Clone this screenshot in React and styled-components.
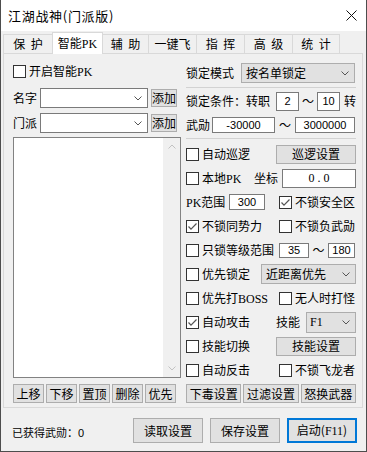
import React from 'react'
import styled, { createGlobalStyle } from 'styled-components'

const CJK = '"Noto Sans CJK SC", "Microsoft YaHei", sans-serif'
const NUM = '"Liberation Sans", Arial, sans-serif'
const SERIF = '"Liberation Serif", "Times New Roman", serif'

const TABS = [
  { label: '保 护', w: 50 },
  { label: '智能PK', w: 51, active: true },
  { label: '辅 助', w: 47 },
  { label: '一键飞', w: 49 },
  { label: '指 挥', w: 49 },
  { label: '高 级', w: 49 },
  { label: '统 计', w: 48 },
]

const LIST_BUTTONS = ['上移', '下移', '置顶', '删除', '优先']
const BOTTOM_BUTTONS = ['下毒设置', '过滤设置', '怒换武器']

const GlobalStyle = createGlobalStyle`
  html, body { margin: 0; padding: 0; background: #ffffff; }
  body { font-family: ${CJK}; font-size: 12px; color: #000; }
  *, *::before, *::after { box-sizing: border-box; }
`

const Window = styled.div`
  width: 367px;
  height: 452px;
  display: flex;
  flex-direction: column;
  background: #f0f0f0;
  border: 1px solid #4d4d4d;
  border-top: none;
  overflow: hidden;
`

const TitleBar = styled.div`
  flex: none;
  height: 31px;
  display: flex;
  align-items: center;
  justify-content: space-between;
  padding: 0 9px 0 7px;
  background: #ffffff;
`

const Title = styled.div`
  font-size: 13px;
  letter-spacing: 0.7px;
  line-height: 16px;
`

const TabStrip = styled.div`
  flex: none;
  display: flex;
  align-items: flex-end;
  height: 22px;
  margin-top: 1px;
  padding-left: 2px;
`

const Tab = styled.div`
  width: ${p => p.$w}px;
  height: ${p => (p.$active ? 22 : 20)}px;
  margin-right: -1px;
  display: flex;
  align-items: center;
  justify-content: center;
  padding-bottom: 1px;
  border: 1px solid #d9d9d9;
  border-bottom: none;
  background: ${p => (p.$active ? '#ffffff' : '#f0f0f0')};
  line-height: 14px;
  white-space: pre;
  word-spacing: 3px;
  ${p => p.$active && 'position: relative; z-index: 1;'}
`

const Panel = styled.div`
  flex: none;
  height: 355px;
  margin: -1px 3px 0 2px;
  border: 1px solid #d9d9d9;
  display: flex;
  gap: 5px;
  padding-left: 9px;
`

const LeftCol = styled.div`
  width: 168px;
  display: flex;
  flex-direction: column;
`

const RightCol = styled.div`
  width: 170px;
  display: flex;
  flex-direction: column;
`

const Row = styled.div`
  flex: none;
  display: flex;
  align-items: center;
  height: ${p => p.$h || 20}px;
  margin-top: ${p => p.$mt || 0}px;
  line-height: 14px;
  white-space: nowrap;
`

const Pair = styled.div`
  flex: none;
  display: grid;
  grid-template-columns: 93px 1fr;
  align-items: center;
  height: 24px;
  line-height: 14px;
  white-space: nowrap;
`

const Cell = styled.div`
  display: flex;
  align-items: center;
`

const Label = styled.span`
  flex: none;
  width: ${p => (p.$w ? `${p.$w}px` : 'auto')};
  margin-left: ${p => (p.$auto ? 'auto' : `${p.$ml || 0}px`)};
  font-size: ${p => p.$fs || 12}px;
`

const Latin = styled.span`
  font-family: ${SERIF};
  font-size: 12px;
`

const Num = styled.span`
  font-family: ${NUM};
  font-size: 11px;
`

const ComboEdit = styled.div`
  flex: none;
  width: ${p => p.$w}px;
  height: 20px;
  background: #ffffff;
  border: 1px solid #7a7a7a;
  display: flex;
  align-items: center;
  justify-content: flex-end;
  padding-right: 5px;
`

const Select = styled.div`
  flex: none;
  width: ${p => p.$w}px;
  height: ${p => p.$h || 20}px;
  margin-left: ${p => (p.$auto ? 'auto' : `${p.$ml || 0}px`)};
  background: #e1e1e1;
  border: 1px solid #adadad;
  display: flex;
  align-items: center;
  justify-content: space-between;
  padding: 0 5px 0 ${p => p.$pl || 4}px;
`

const Button = styled.button`
  flex: ${p => (p.$w ? 'none' : '1')};
  width: ${p => (p.$w ? `${p.$w}px` : 'auto')};
  height: ${p => p.$h || 19}px;
  margin: 0 0 0 ${p => (p.$auto ? 'auto' : `${p.$ml || 0}px`)};
  padding: 0;
  background: #e1e1e1;
  border: 1px solid #adadad;
  border-radius: 0;
  color: #000;
  font-family: ${CJK};
  font-size: 12px;
  line-height: 14px;
  display: flex;
  align-items: center;
  justify-content: center;
  white-space: nowrap;
`

const Input = styled.div`
  flex: none;
  width: ${p => p.$w}px;
  height: ${p => p.$h || 19}px;
  margin-left: ${p => (p.$auto ? 'auto' : `${p.$ml || 0}px`)};
  background: #ffffff;
  border: 1px solid #7a7a7a;
  display: flex;
  align-items: center;
  justify-content: center;
  font-family: ${NUM};
  font-size: 11px;
  line-height: 1;
`

const Tilde = styled.span`
  flex: none;
  width: ${p => p.$w}px;
  text-align: center;
`

const Separator = styled.div`
  flex: none;
  height: 1px;
  margin-top: ${p => p.$mt}px;
  background: #d2d2d2;
`

const ListBox = styled.div`
  flex: none;
  height: 241px;
  margin-top: 4px;
  border: 1px solid #828282;
  background: #ffffff;
  display: flex;
  justify-content: flex-end;
`

const ScrollBar = styled.div`
  width: 17px;
  background: #f0f0f0;
  display: flex;
  flex-direction: column;
  justify-content: space-between;
`

const ScrollArrow = styled.div`
  height: 17px;
  display: flex;
  align-items: center;
  justify-content: center;
`

const ButtonRow = styled.div`
  flex: none;
  display: flex;
  gap: 2px;
  margin-top: ${p => p.$mt}px;
`

const CheckWrap = styled.label`
  display: flex;
  align-items: center;
  gap: 3px;
  white-space: nowrap;
`

const Box = styled.span`
  flex: none;
  width: 13px;
  height: 13px;
  border: 1px solid #333333;
  background: #ffffff;
  display: flex;
`

const Footer = styled.div`
  flex: 1;
  display: flex;
  align-items: center;
  gap: 7px;
  padding: 2px 9px 0 11px;
`

const Status = styled.div`
  flex: 1;
  padding-top: 3px;
  font-size: 11px;
  line-height: 14px;
`

const FooterButton = styled.button`
  flex: none;
  width: 70px;
  height: 25px;
  padding: 0;
  background: #e1e1e1;
  border: ${p => (p.$primary ? '2px solid #0078d7' : '1px solid #adadad')};
  border-radius: 0;
  color: #000;
  font-family: ${CJK};
  font-size: 12px;
  line-height: 14px;
`

const Chevron = ({ color = '#555555', up }) => (
  <svg width="8" height="5" viewBox="0 0 8 5">
    <polyline
      points={up ? '0.5,4.5 4,1 7.5,4.5' : '0.5,0.5 4,4 7.5,0.5'}
      fill="none"
      stroke={color}
      strokeWidth="1"
    />
  </svg>
)

const CloseIcon = () => (
  <svg width="11" height="11" viewBox="0 0 11 11">
    <path d="M0.5 0.5 L10.5 10.5 M10.5 0.5 L0.5 10.5" stroke="#111" strokeWidth="1" />
  </svg>
)

const Check = ({ checked, children }) => (
  <CheckWrap>
    <Box>
      {checked && (
        <svg width="11" height="11" viewBox="0 0 11 11">
          <polyline points="1.5,5.5 4,8.2 9.5,2.5" fill="none" stroke="#555" strokeWidth="1.2" />
        </svg>
      )}
    </Box>
    <span>{children}</span>
  </CheckWrap>
)

const App = () => (
  <Window>
    <GlobalStyle />
    <TitleBar>
      <Title>江湖战神(门派版)</Title>
      <CloseIcon />
    </TitleBar>

    <TabStrip>
      {TABS.map(tab => (
        <Tab key={tab.label} $w={tab.w} $active={tab.active}>
          {tab.label === '智能PK' ? <span>智能<Latin>PK</Latin></span> : tab.label}
        </Tab>
      ))}
    </TabStrip>

    <Panel>
      <LeftCol>
        <Row $h={18} $mt={8}>
          <Check>开启智能<Latin>PK</Latin></Check>
        </Row>
        <Row $mt={8}>
          <Label $w={27}>名字</Label>
          <ComboEdit $w={108}><Chevron /></ComboEdit>
          <Button $w={26} $h={18} $ml={3}>添加</Button>
        </Row>
        <Row $mt={5}>
          <Label $w={27}>门派</Label>
          <ComboEdit $w={108}><Chevron /></ComboEdit>
          <Button $w={26} $h={18} $ml={3}>添加</Button>
        </Row>
        <ListBox>
          <ScrollBar>
            <ScrollArrow><Chevron up color="#c2c2c2" /></ScrollArrow>
            <ScrollArrow><Chevron color="#c2c2c2" /></ScrollArrow>
          </ScrollBar>
        </ListBox>
        <ButtonRow $mt={6}>
          {LIST_BUTTONS.map(b => <Button key={b} $w={31}>{b}</Button>)}
        </ButtonRow>
      </LeftCol>

      <RightCol>
        <Row $mt={9}>
          <Label $w={55}>锁定模式</Label>
          <Select $w={114}>
            <span>按名单锁定</span>
            <Chevron />
          </Select>
        </Row>
        <Separator $mt={4} />
        <Row $mt={3}>
          <Label>锁定条件：转职</Label>
          <Input $w={23} $ml={6}>2</Input>
          <Tilde $w={18}>～</Tilde>
          <Input $w={23}>10</Input>
          <Label $ml={4}>转</Label>
        </Row>
        <Row $mt={4}>
          <Label $w={26}>武勋</Label>
          <Input $w={63} $h={16}>-30000</Input>
          <Tilde $w={20}>～</Tilde>
          <Input $w={60} $h={16}>3000000</Input>
        </Row>
        <Separator $mt={3} />

        <Row $h={24} $mt={3}>
          <Check>自动巡逻</Check>
          <Button $w={80} $auto>巡逻设置</Button>
        </Row>
        <Row $h={24}>
          <Check>本地<Latin>PK</Latin></Check>
          <Label $auto>坐标</Label>
          <Input $w={74} $ml={4}><Latin>0 . 0</Latin></Input>
        </Row>
        <Pair>
          <Cell>
            <Label $w={43}><Latin>PK</Latin>范围</Label>
            <Input $w={36} $h={16}>300</Input>
          </Cell>
          <Check checked>不锁安全区</Check>
        </Pair>
        <Pair>
          <Check checked>不锁同势力</Check>
          <Check>不锁负武勋</Check>
        </Pair>
        <Pair>
          <Check>只锁等级范围</Check>
          <Cell>
            <Input $w={30} $h={15}>35</Input>
            <Tilde $w={19}>～</Tilde>
            <Input $w={27} $h={15}>180</Input>
          </Cell>
        </Pair>
        <Row $h={24}>
          <Check>优先锁定</Check>
          <Select $w={95} $auto>
            <span>近距离优先</span>
            <Chevron />
          </Select>
        </Row>
        <Pair>
          <Check>优先打<Latin>BOSS</Latin></Check>
          <Check>无人时打怪</Check>
        </Pair>
        <Row $h={24}>
          <Check checked>自动攻击</Check>
          <Label $auto>技能</Label>
          <Select $w={50} $h={21} $ml={6} $pl={3}>
            <Latin>F1</Latin>
            <Chevron />
          </Select>
        </Row>
        <Row $h={24}>
          <Check>技能切换</Check>
          <Button $w={80} $auto>技能设置</Button>
        </Row>
        <Pair>
          <Check>自动反击</Check>
          <Check>不锁飞龙者</Check>
        </Pair>

        <ButtonRow $mt={2}>
          {BOTTOM_BUTTONS.map(b => <Button key={b}>{b}</Button>)}
        </ButtonRow>
      </RightCol>
    </Panel>

    <Footer>
      <Status>已获得武勋：<Num>0</Num></Status>
      <FooterButton>读取设置</FooterButton>
      <FooterButton>保存设置</FooterButton>
      <FooterButton $primary>启动(<Latin>F11</Latin>)</FooterButton>
    </Footer>
  </Window>
)

export default App
